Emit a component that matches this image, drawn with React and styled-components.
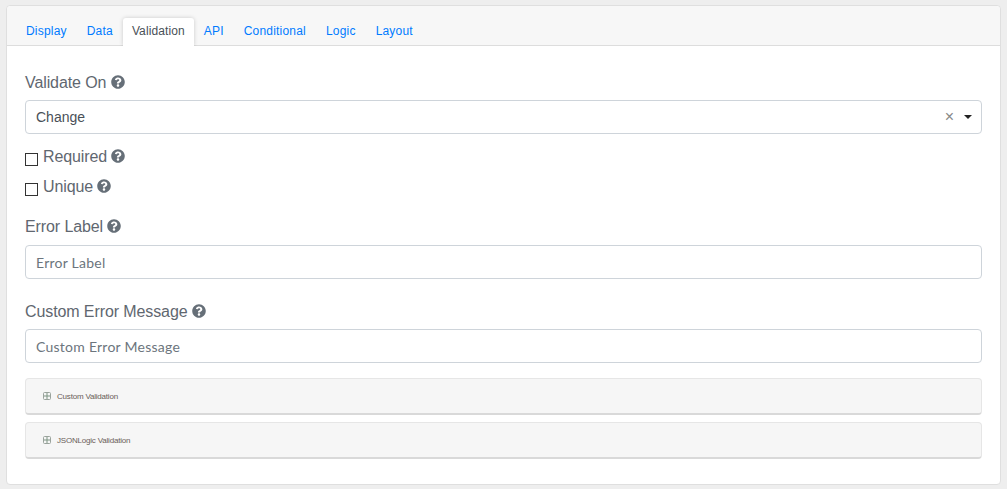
import styled, { createGlobalStyle } from 'styled-components'
import { FaQuestionCircle } from 'react-icons/fa'

const tabs = ['Display', 'Data', 'Validation', 'API', 'Conditional', 'Logic', 'Layout']

const GlobalStyle = createGlobalStyle`
  html, body {
    margin: 0;
    height: 100%;
    background: #eeeeee;
  }
  * {
    box-sizing: border-box;
  }
`

const Help = () => (
  <HelpIcon>
    <FaQuestionCircle />
  </HelpIcon>
)

const PlusIcon = () => (
  <PlusSvg viewBox="0 0 8 8">
    <rect x="0.5" y="0.5" width="7" height="7" rx="1" fill="none" stroke="#9aa39c" />
    <path d="M4 1v6M1 4h6" stroke="#7f9584" />
  </PlusSvg>
)

const App = () => {
  return (
    <Page>
      <GlobalStyle />
      <Card>
        <TabBar>
          {tabs.map((tab) => (
            <Tab key={tab} $active={tab === 'Validation'}>
              {tab}
            </Tab>
          ))}
        </TabBar>
        <Body>
          <Label>
            Validate On <Help />
          </Label>
          <SelectBox>
            <span>Change</span>
            <SelectControls>
              <Clear>×</Clear>
              <Caret />
            </SelectControls>
          </SelectBox>
          <CheckRow $first>
            <CheckBox />
            <CheckLabel>
              Required <Help />
            </CheckLabel>
          </CheckRow>
          <CheckRow>
            <CheckBox />
            <CheckLabel>
              Unique <Help />
            </CheckLabel>
          </CheckRow>
          <FieldLabel $top={22} $bottom={9}>
            Error Label <Help />
          </FieldLabel>
          <TextInput placeholder="Error Label" />
          <FieldLabel $top={24} $bottom={8}>
            Custom Error Message <Help />
          </FieldLabel>
          <TextInput placeholder="Custom Error Message" />
          <Panel $top={15}>
            <PlusIcon />
            <PanelTitle>Custom Validation</PanelTitle>
          </Panel>
          <Panel $top={7}>
            <PlusIcon />
            <PanelTitle>JSONLogic Validation</PanelTitle>
          </Panel>
        </Body>
      </Card>
    </Page>
  )
}

export default App

const Page = styled.div`
  padding: 5px 6px 4px 6px;
  height: 489px;
  overflow: hidden;
  font-family: 'Liberation Sans', Arial, sans-serif;
`
const Card = styled.div`
  height: 480px;
  border: 1px solid #dfdfdf;
  border-radius: 4px;
  background: #fff;
`
const TabBar = styled.div`
  display: flex;
  align-items: flex-end;
  height: 40px;
  padding: 0 9px;
  border-bottom: 1px solid #dddddd;
  border-radius: 4px 4px 0 0;
  background: #f7f7f7;
`
const Tab = styled.div`
  height: ${(p) => (p.$active ? '28px' : '27px')};
  margin-bottom: ${(p) => (p.$active ? '-1px' : '0')};
  padding: ${(p) => (p.$active ? '0 9px' : '0 10px')};
  border-radius: 3px 3px 0 0;
  font-size: 12px;
  letter-spacing: ${(p) => (p.$active ? '0.1px' : '0.2px')};
  line-height: 26px;
  color: ${(p) => (p.$active ? '#495057' : '#007bff')};
  background: ${(p) => (p.$active ? '#fff' : 'transparent')};
  box-shadow: ${(p) => (p.$active ? '0 0 4px rgba(0, 0, 0, 0.18)' : 'none')};
  clip-path: ${(p) => (p.$active ? 'inset(-5px -5px 0 -5px)' : 'none')};
`
const Body = styled.div`
  padding: 28px 18px 0;
`
const Label = styled.div`
  height: 18px;
  margin-bottom: 8px;
  font-size: 16px;
  letter-spacing: -0.1px;
  line-height: 18px;
  color: #5f6770;
`
const FieldLabel = styled(Label)`
  margin-top: ${(p) => p.$top}px;
  margin-bottom: ${(p) => p.$bottom}px;
`
const HelpIcon = styled.span`
  display: inline-flex;
  font-size: 14px;
  vertical-align: -1px;
  color: #666f78;
`
const SelectBox = styled.div`
  display: flex;
  align-items: center;
  justify-content: space-between;
  height: 34px;
  padding: 0 10px;
  border: 1px solid #ced4da;
  border-radius: 4px;
  font-size: 14px;
  color: #495057;
`
const SelectControls = styled.div`
  display: flex;
  align-items: center;
  gap: 10px;
  margin-right: -1px;
`
const Clear = styled.span`
  font-size: 16px;
  line-height: 16px;
  color: #888;
`
const Caret = styled.span`
  width: 0;
  height: 0;
  border: 4px solid transparent;
  border-top: 4px solid #222;
  border-bottom: 0;
`
const CheckRow = styled.div`
  display: flex;
  align-items: flex-start;
  height: 18px;
  margin-top: ${(p) => (p.$first ? '14px' : '12px')};
`
const CheckBox = styled.span`
  width: 13px;
  height: 13px;
  margin-top: 5px;
  margin-right: 5px;
  border: 1px solid #333;
  background: #fff;
`
const CheckLabel = styled.span`
  font-size: 16px;
  letter-spacing: -0.1px;
  line-height: 18px;
  color: #5f6770;
`
const TextInput = styled.input`
  display: block;
  width: 100%;
  height: 34px;
  padding: 0 10px;
  border: 1px solid #ced4da;
  border-radius: 4px;
  outline: none;
  font-family: Lato, sans-serif;
  font-size: 14px;
  letter-spacing: 0.25px;
  background: #fff;

  &::placeholder {
    color: #6c757d;
    opacity: 1;
  }
`
const Panel = styled.div`
  display: flex;
  align-items: center;
  height: 37px;
  margin-top: ${(p) => p.$top}px;
  padding-left: 17px;
  border: 1px solid #e6e6e6;
  border-bottom: 2px solid #d9d9d9;
  border-radius: 4px;
  background: #f6f6f6;
`
const PlusSvg = styled.svg`
  width: 8px;
  height: 8px;
  margin-right: 6px;
`
const PanelTitle = styled.span`
  padding-top: 1px;
  font-size: 8px;
  letter-spacing: -0.2px;
  color: #6a6058;
`
